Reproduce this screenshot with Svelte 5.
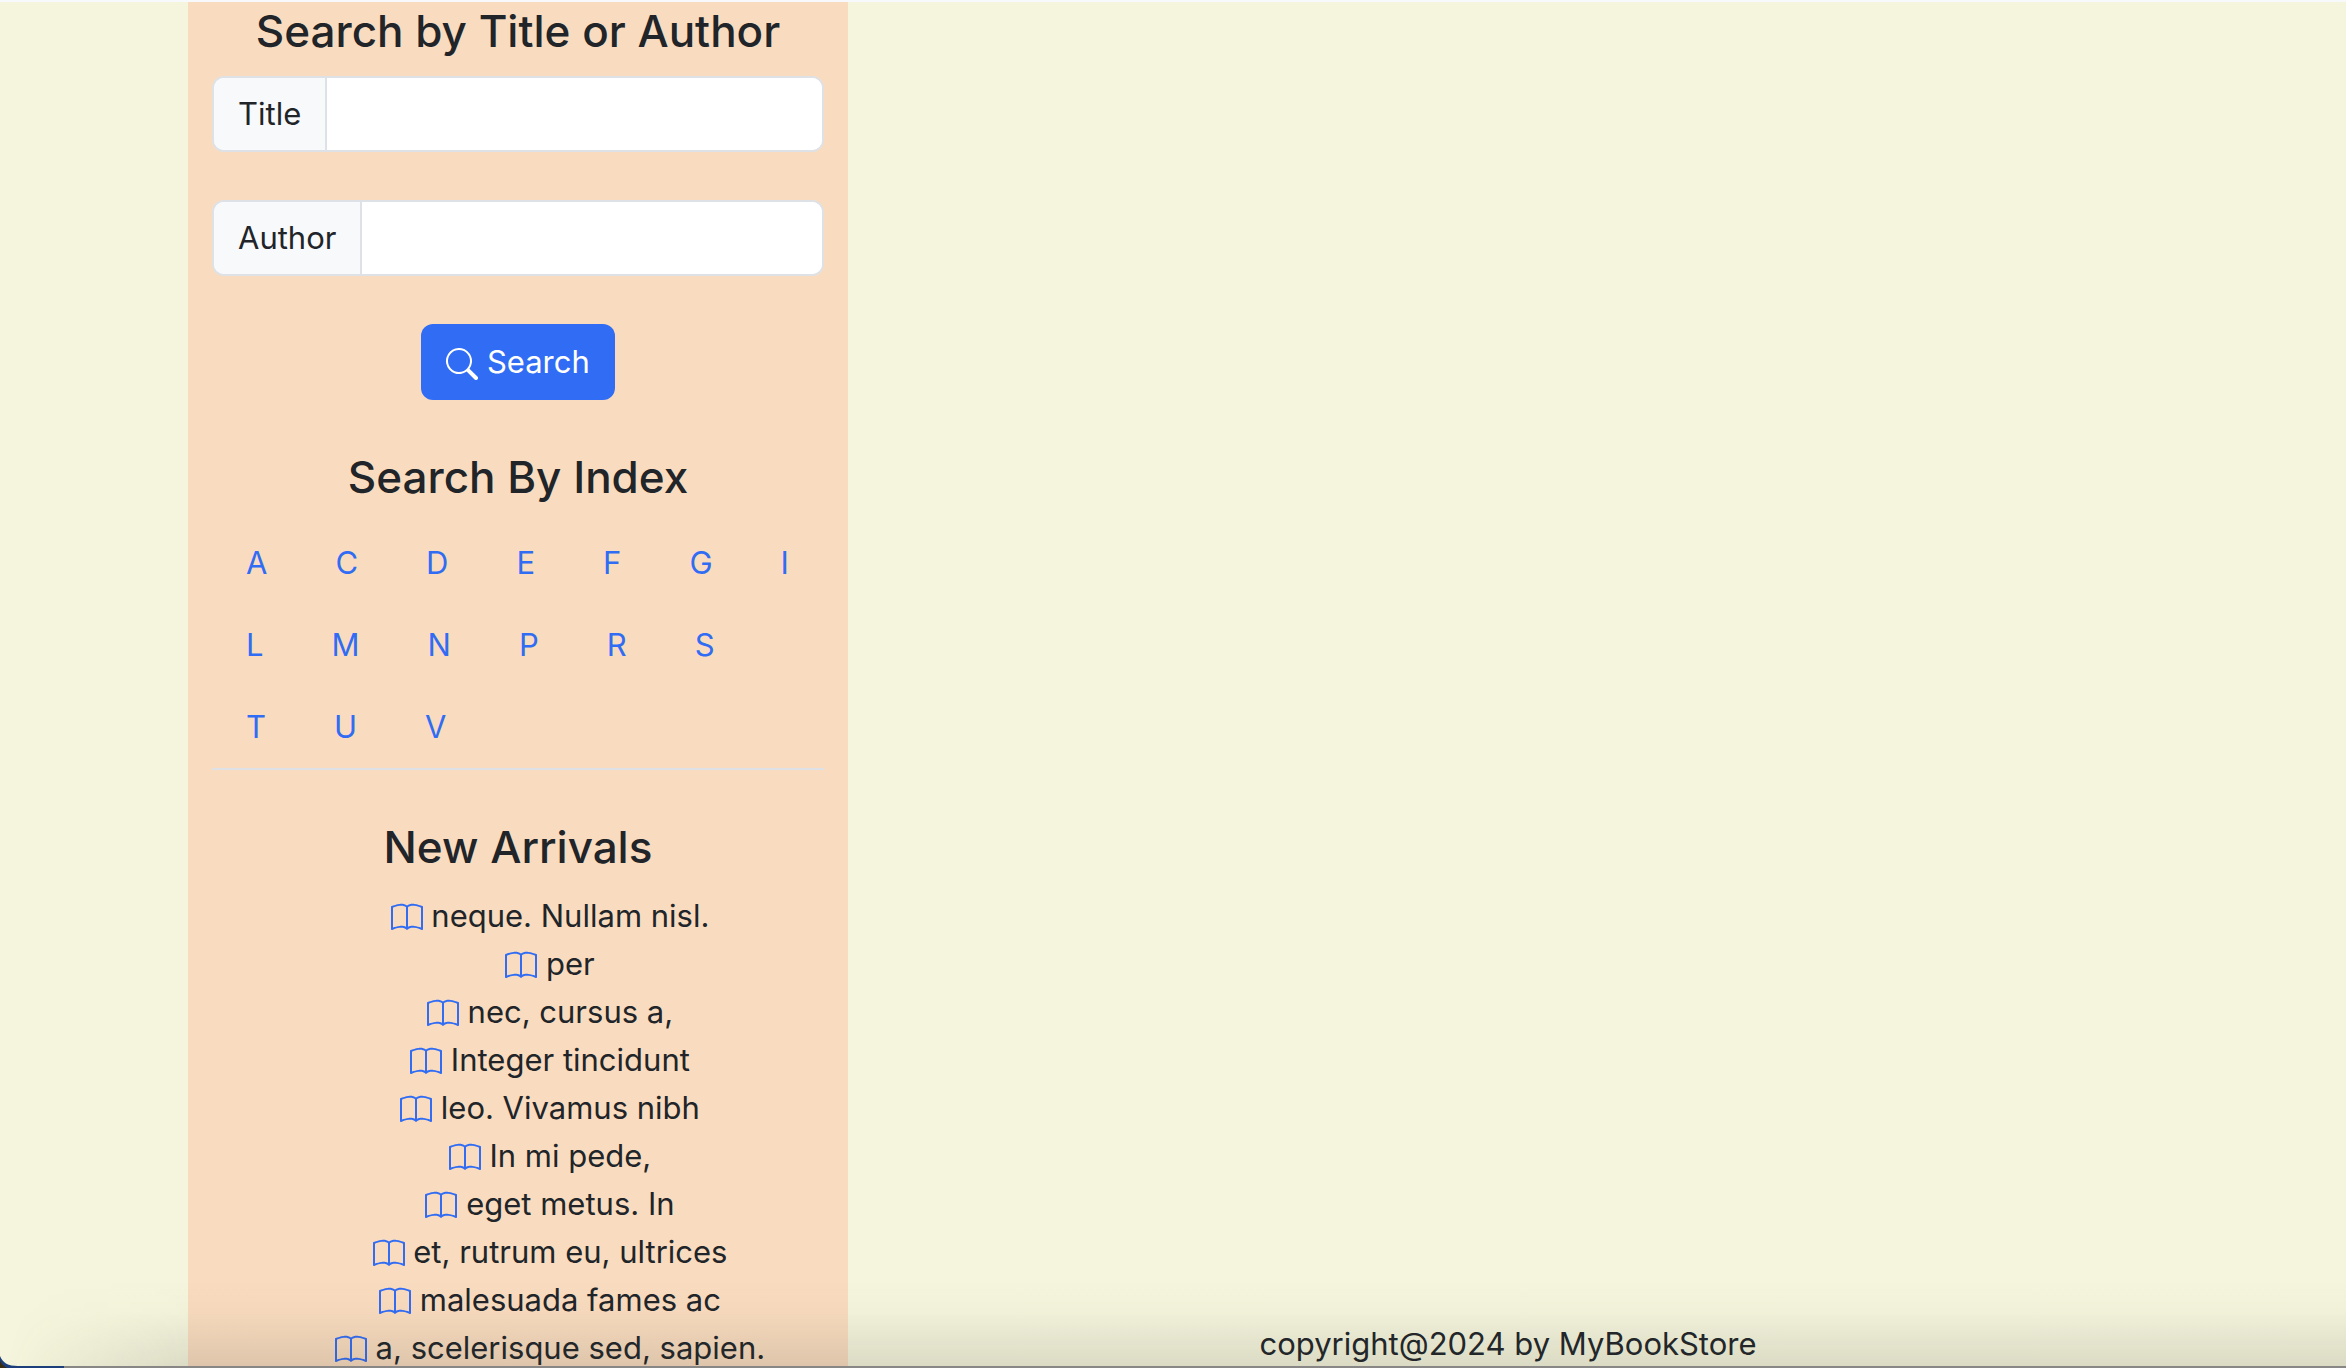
<script>
  const indexRows = [
    ['A', 'C', 'D', 'E', 'F', 'G', 'I'],
    ['L', 'M', 'N', 'P', 'R', 'S'],
    ['T', 'U', 'V'],
  ];

  const arrivals = [
    'neque. Nullam nisl.',
    'per',
    'nec, cursus a,',
    'Integer tincidunt',
    'leo. Vivamus nibh',
    'In mi pede,',
    'eget metus. In',
    'et, rutrum eu, ultrices',
    'malesuada fames ac',
    'a, scelerisque sed, sapien.',
  ];

  let title = $state('');
  let author = $state('');
</script>

<div class="page">
  <div class="layout">
    <aside class="panel">
      <form onsubmit={(e) => e.preventDefault()}>
        <h2>Search by Title or Author</h2>
        <div class="group">
          <label for="title">Title</label>
          <input id="title" type="text" bind:value={title} />
        </div>
        <div class="group">
          <label for="author">Author</label>
          <input id="author" type="text" bind:value={author} />
        </div>
        <button type="submit">
          <svg class="icon" viewBox="0 0 16 16" aria-hidden="true">
            <path d="M11.742 10.344a6.5 6.5 0 1 0-1.397 1.398h-.001q.044.06.098.115l3.85 3.85a1 1 0 0 0 1.415-1.414l-3.85-3.85a1 1 0 0 0-.115-.1zM12 6.5a5.5 5.5 0 1 1-11 0 5.5 5.5 0 0 1 11 0" />
          </svg>
          Search
        </button>
      </form>

      <nav aria-label="Search by index">
        <h2>Search By Index</h2>
        {#each indexRows as row}
          <div class="letters">
            {#each row as letter}
              <a href="#{letter}">{letter}</a>
            {/each}
          </div>
        {/each}
      </nav>

      <section>
        <h2>New Arrivals</h2>
        <ul>
          {#each arrivals as name}
            <li>
              <svg class="icon book" viewBox="0 0 16 16" aria-hidden="true">
                <path d="M1 2.828c.885-.37 2.154-.769 3.388-.893 1.33-.134 2.458.063 3.112.752v9.746c-.935-.53-2.12-.603-3.213-.493-1.18.12-2.37.461-3.287.811zm7.5-.141c.654-.689 1.782-.886 3.112-.752 1.234.124 2.503.523 3.388.893v9.923c-.918-.35-2.107-.692-3.287-.81-1.094-.111-2.278-.039-3.213.492zM8 1.783C7.015.936 5.587.81 4.287.94c-1.514.153-3.042.672-3.994 1.105A.5.5 0 0 0 0 2.5v11a.5.5 0 0 0 .707.455c.882-.4 2.303-.881 3.68-1.02 1.409-.142 2.59.087 3.223.877a.5.5 0 0 0 .78 0c.633-.79 1.814-1.019 3.222-.877 1.378.139 2.8.62 3.681 1.02A.5.5 0 0 0 16 13.5v-11a.5.5 0 0 0-.293-.455c-.952-.433-2.48-.952-3.994-1.105C10.413.809 8.985.936 8 1.783" />
              </svg>
              {name}
            </li>
          {/each}
        </ul>
      </section>
    </aside>

    <main>
      <footer>copyright@2024 by MyBookStore</footer>
    </main>
  </div>

  <div class="shade"></div>
  <div class="edge"></div>
  <svg class="corner" viewBox="0 0 64 12" aria-hidden="true">
    <path d="M0 0C3 7 8 10 18 10H64V12H0Z" fill="#1c3f7c" />
    <path d="M0 4C1 8 4 10 7 12H0Z" fill="#3a2a12" />
  </svg>
</div>

<style>
  :global(body) {
    background: #f5f5dd;
  }

  .page {
    position: relative;
    box-sizing: border-box;
    height: 100vh;
    overflow: hidden;
    border-top: 2px solid #f8f9fa;
    background: #f5f5dd;
    color: #212529;
    font-family: Inter, 'Liberation Sans', sans-serif;
    font-size: 31px;
    line-height: 48px;
  }

  .layout {
    display: grid;
    grid-template-columns: minmax(0, 1fr) minmax(0, 2fr);
    height: 100%;
    padding: 0 178px 0 188px;
  }

  .panel {
    padding: 0 24px;
    background: #f9dcbf;
  }

  h2 {
    margin: 0 0 16px;
    font-size: 44px;
    font-weight: 500;
    line-height: 58px;
    text-align: center;
    white-space: nowrap;
  }

  form {
    display: flex;
    flex-direction: column;
    align-items: center;
    margin-bottom: 48px;
  }

  .group {
    display: flex;
    box-sizing: border-box;
    width: 100%;
    height: 76px;
    margin-bottom: 48px;
    overflow: hidden;
    border: 2px solid #dee2e6;
    border-radius: 12px;
    background: #fff;
  }

  label {
    padding: 12px 24px;
    border-right: 2px solid #dee2e6;
    background: #f8f9fb;
  }

  input {
    flex: 1;
    min-width: 0;
    padding: 0 24px;
    border: 0;
    outline: 0;
    background: #fff;
    color: inherit;
    font: inherit;
  }

  button {
    height: 76px;
    padding: 0 25px;
    border: 0;
    border-radius: 12px;
    background: #316cf4;
    color: #fff;
    font: inherit;
  }

  .icon {
    width: 32px;
    height: 32px;
    fill: currentColor;
    vertical-align: -7px;
  }

  .book {
    color: #316cf4;
  }

  nav {
    margin-bottom: 48px;
    border-bottom: 2px solid #dee2e6;
  }

  .letters {
    display: flex;
    align-items: center;
    gap: 68px;
    height: 82px;
    padding-left: 34px;
  }

  a {
    color: #316cf4;
    text-decoration: none;
  }

  ul {
    margin: 0;
    padding: 0 0 0 64px;
    list-style: none;
  }

  li {
    height: 48px;
    text-align: center;
    white-space: nowrap;
  }

  main {
    display: flex;
    flex-direction: column;
    justify-content: flex-end;
  }

  footer {
    padding-bottom: 4px;
    text-align: center;
  }

  /* Soft shadow along the lower edge of the window */
  .shade {
    position: absolute;
    inset: auto 0 0;
    height: 88px;
    background: linear-gradient(transparent, rgb(60 60 50 / 2%) 35%, rgb(60 60 50 / 14%));
    mask-image: linear-gradient(100deg, transparent 20px, #000 200px);
    pointer-events: none;
  }

  .edge {
    position: absolute;
    inset: auto 0 0;
    height: 2px;
    background: #898686;
  }

  .corner {
    position: absolute;
    bottom: 0;
    left: 0;
    width: 64px;
    height: 12px;
  }
</style>
